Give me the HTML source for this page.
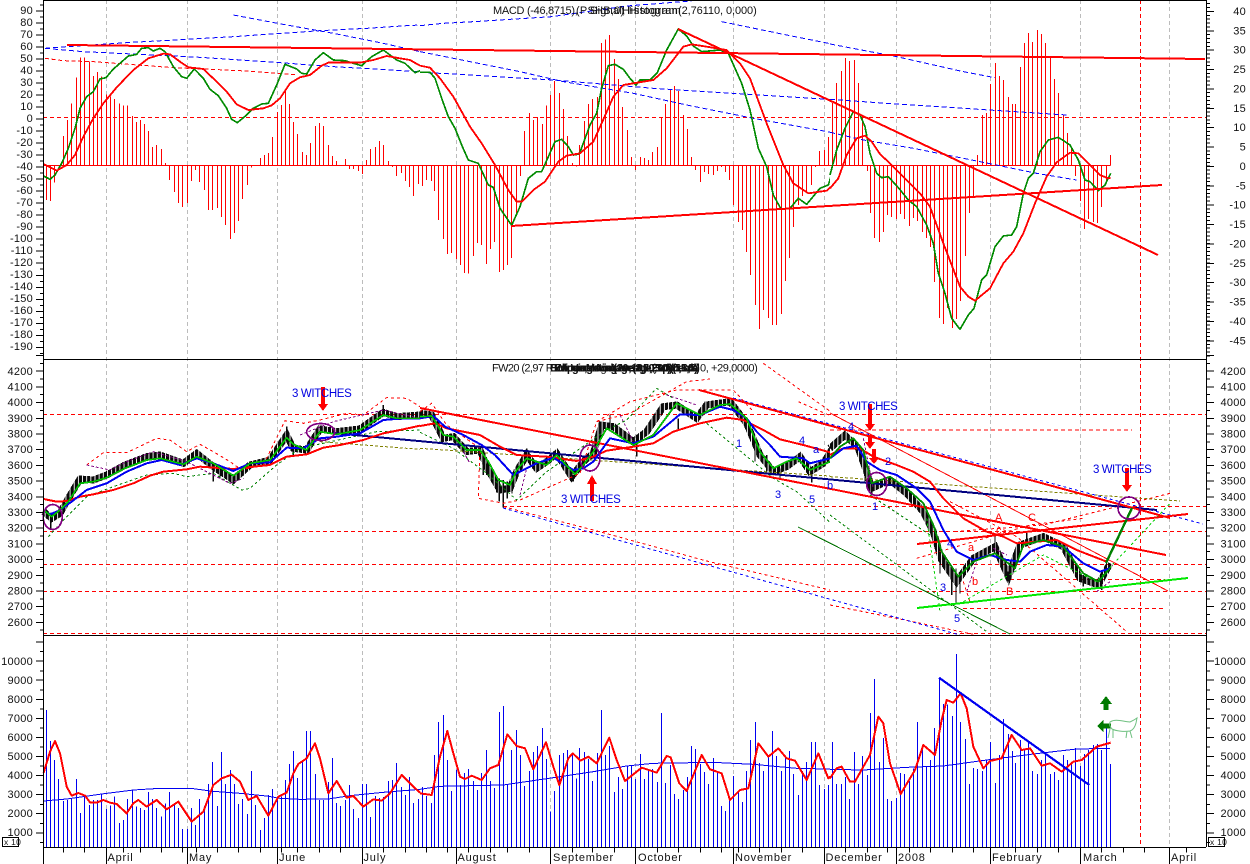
<!DOCTYPE html>
<html><head><meta charset="utf-8"><title>FW20 chart</title>
<style>
html,body{margin:0;padding:0;background:#fff;width:1250px;height:864px;overflow:hidden}
svg{display:block}
text{font-family:"Liberation Sans",sans-serif;font-size:11px;fill:#111;letter-spacing:.25px}
.w{fill:#0000e0;font-size:11.5px}
.b{fill:#0000e0;font-size:11px}
.r{fill:#f00;font-size:11px}
</style></head><body>
<svg width="1250" height="864" viewBox="0 0 1250 864" xmlns="http://www.w3.org/2000/svg" shape-rendering="crispEdges">
<defs><clipPath id="c2"><rect x="0" y="-100" width="1230" height="1400"/></clipPath>
<pattern id="cd" patternUnits="userSpaceOnUse" width="12.45" height="12"><rect x="0" y="0" width="9" height="12" fill="#0a0a0a"/></pattern></defs>
<rect width="1250" height="864" fill="#fff"/>

<!-- gridlines -->
<g stroke="#bcbcbc" stroke-width="1" stroke-dasharray="4 3" fill="none">
<path d="M106.5 0V847M187.5 0V847M277.5 0V847M362.5 0V847M456.5 0V847M550.5 0V847M635.5 0V847M733.5 0V847M824.5 0V847M896.5 0V847M990.5 0V847M1080.5 0V847M1169.5 0V847"/>
</g>
<path d="M1140.5 0V847" stroke="#f00" stroke-dasharray="4 3" fill="none"/>
<g stroke="#f00" stroke-dasharray="4 3" fill="none" stroke-width="1">
<path d="M43 117.5H1206M43 414.5H1206M503 506.5H1206M43 531.5H1206M43 564.5H1206M43 591.5H1206M43 633.5H1206M830 430H1132M1010 579.5H1165M963 608.5H1163"/>
</g>

<!-- MACD histogram -->
<g fill="none" stroke="#f00" stroke-width="3">
<path transform="scale(.33333)" d="M131 496H1260M139 496V600M151 496V603M163 496V548M190 496V408M202 496V360M214 496V310M229 496V232M241 496V172M253 496V172M268 496V185M281 496V228M293 496V216M305 496V229M319 496V283M331 496V290M343 496V297M358 496V310M370 496V316M382 496V316M397 496V348M409 496V366M421 496V360M433 496V372M445 496V393M457 496V441M469 496V435M484 496V447M496 496V489M508 496V540M523 496V576M535 496V609M547 496V621M562 496V609M574 496V543M586 496V510M598 496V546M613 496V570M625 496V630M637 496V630M652 496V624M664 496V651M676 496V675M691 496V717M703 496V699M715 496V663M727 496V597M742 496V555M754 496V503M781 496V474M793 496V465M805 496V459M817 496V411M832 496V336M844 496V315M856 496V270M868 496V312M880 496V366M892 496V402M907 496V456M919 496V465M931 496V429M946 496V378M958 496V369M970 496V378M985 496V435M997 496V468M1009 496V483M1036 496V477M1048 496V507M1060 496V507M1075 496V513M1087 496V522M1099 496V480M1111 496V447M1126 496V441M1138 496V423M1150 496V435M1165 496V483M1177 496V501M1189 496V528M1204 496V519M1216 496V543M1228 496V561M1240 496V588M1255 496V552"/>
<path transform="translate(420,0) scale(.33333)" clip-path="url(#c2)" d="M0 496H1230M7 496V558M19 496V540M34 496V543M44 496V573M55 496V660M70 496V717M82 496V762M94 496V759M109 496V777M121 496V795M133 496V819M145 496V821M160 496V768M172 496V729M184 496V735M199 496V792M211 496V747M223 496V726M238 496V816M250 496V810M262 496V795M274 496V774M289 496V645M301 496V528M313 496V393M328 496V339M340 496V360M352 496V351M367 496V372M379 496V316M391 496V285M403 496V243M418 496V279M430 496V327M442 496V408M457 496V489M469 496V500M478 496V435M493 496V363M505 496V312M517 496V297M532 496V291M544 496V129M556 496V118M568 496V105M583 496V177M595 496V237M607 496V321M622 496V390M634 496V471M646 496V510M661 496V471M673 496V474M685 496V480M697 496V456M712 496V441M724 496V351M736 496V312M751 496V267M763 496V258M775 496V273M790 496V345M802 496V387M814 496V471M826 496V510M841 496V546M853 496V516M865 496V522M880 496V525M892 496V513M904 496V501M916 496V516M928 496V540M940 496V615M955 496V666M967 496V690M979 496V756M991 496V825M1006 496V915M1018 496V987M1030 496V930M1045 496V954M1057 496V975M1069 496V975M1084 496V942M1096 496V843M1108 496V774M1120 496V681M1135 496V615M1147 496V588M1159 496V573M1174 496V555M1186 496V501M1198 496V453M1213 496V450M1225 496V411"/>
<path transform="translate(830,0) scale(.33333)" d="M0 496H842M7 496V309M19 496V249M34 496V213M46 496V174M58 496V183M73 496V180M85 496V249M97 496V354M112 496V513M121 496V639M133 496V714M148 496V726M160 496V696M172 496V645M184 496V651M199 496V657M211 496V642M223 496V657M238 496V678M250 496V654M262 496V663M277 496V696M289 496V714M301 496V741M313 496V846M328 496V954M340 496V972M352 496V924M367 496V984M379 496V957M391 496V903M406 496V768M418 496V639M430 496V591M442 496V465M457 496V345M469 496V339M481 496V252M496 496V189M508 496V228M520 496V240M535 496V291M547 496V312M556 496V312M571 496V201M583 496V129M595 496V99M607 496V126M622 496V90M634 496V102M646 496V129M661 496V171M673 496V237M685 496V279M700 496V345M712 496V399M724 496V440M737 496V528M751 496V603M763 496V687M775 496V657M790 496V666M802 496V669M814 496V621M829 496V543M841 496V465"/>
</g>

<!-- top dashed trend lines -->
<g fill="none" stroke="#00f" stroke-width="3" stroke-dasharray="15 9">
<path transform="scale(.33333)" d="M135 145L200 140L395 127L560 118L700 110L960 92L1100 85L1220 77L1260 75M135 145L250 155L420 163L600 172L800 185L1000 200L1260 215M700 45L860 75L1000 100L1150 130L1260 155"/>
<path transform="translate(420,0) scale(.33333)" clip-path="url(#c2)" d="M0 77L70 70L160 65L395 50L620 18L800 4L860 -3M0 217L100 222L400 240L700 265L1260 300M0 155L100 175L300 215L430 245L640 280L800 315L1000 355L1250 400M905 65L1100 105L1260 137"/>
<path transform="translate(830,0) scale(.33333)" d="M0 298L170 310L400 325L710 345M0 397L100 420L250 445L450 485L620 520L740 540M0 132L110 153L200 170L400 215L495 233"/>
</g>
<path transform="scale(.33333)" fill="none" stroke="#f00" stroke-width="3" stroke-dasharray="12 8" d="M135 175L190 182L280 185L520 203L720 212L890 224"/>

<!-- MACD lines -->
<g fill="none" stroke="#008a00" stroke-width="5" stroke-linejoin="round">
<path transform="scale(.33333)" d="M131 528L150 538L165 525L185 490L205 445L225 385L240 325L260 290L280 275L300 237L318 233L340 207L360 190L385 168L410 163L425 145L445 143L460 153L480 145L495 155L520 200L545 230L560 235L583 207L610 235L630 268L655 287L680 325L695 358L712 368L740 345L760 325L785 312L805 310L830 255L855 193L890 207L905 220L920 222L945 180L970 158L1000 180L1035 182L1060 190L1085 197L1115 170L1150 150L1190 180L1215 190L1245 218L1260 212"/>
<path transform="translate(420,0) scale(.33333)" clip-path="url(#c2)" d="M0 217L30 217L45 235L65 295L85 350L105 385L125 435L145 480L175 490L205 555L220 562L240 625L275 676L300 620L325 535L350 515L365 515L405 425L425 418L445 440L460 465L478 462L510 375L530 340L545 265L565 197L585 193L610 208L630 235L648 255L660 240L690 240L712 218L740 150L775 87L800 108L820 138L845 155L900 150L925 160L965 250L990 330L1015 445L1040 500L1060 585L1083 627L1110 625L1135 595L1160 613L1200 565L1225 555L1245 490L1260 430"/>
<path transform="translate(830,0) scale(.33333)" d="M0 525L20 450L45 385L70 335L90 345L105 380L120 460L140 520L155 533L175 530L205 563L235 600L260 620L290 675L310 730L325 820L345 880L365 955L390 988L415 945L432 925L455 840L470 825L495 740L520 708L545 705L560 680L580 580L595 535L610 520L630 455L655 420L685 412L720 435L745 480L765 540L780 545L805 572L825 555L842 520"/>
</g>
<g fill="none" stroke="#f00" stroke-width="5.5" stroke-linejoin="round">
<path transform="scale(.33333)" d="M131 492L170 512L200 495L225 465L250 410L280 355L310 310L350 262L400 210L445 175L490 161L510 163L540 185L565 202L610 207L650 245L680 275L710 313L745 330L790 325L815 316L840 295L870 250L900 232L930 225L965 197L985 188L1080 188L1120 180L1160 168L1200 175L1230 180L1260 197"/>
<path transform="translate(420,0) scale(.33333)" clip-path="url(#c2)" d="M0 197L30 203L60 235L100 290L150 380L185 430L225 495L265 570L290 605L305 605L340 570L375 545L415 485L440 467L480 460L520 425L545 370L580 290L610 255L640 250L700 240L740 205L790 140L815 133L860 140L920 150L960 190L990 235L1040 370L1090 495L1120 550L1165 580L1220 572L1245 550L1260 535"/>
<path transform="translate(830,0) scale(.33333)" d="M0 565L25 535L50 465L80 415L105 407L125 425L150 462L190 500L240 550L270 580L300 620L340 730L390 860L415 890L435 902L480 865L520 790L550 755L580 700L615 610L650 530L680 487L720 458L745 460L780 495L810 525L835 535L842 533"/>
</g>
<g fill="none" stroke="#f00" stroke-width="2">
<path d="M67 45L1205 59M678 29L1158 255M511 226L1162 185"/>
</g>

<!-- candles -->
<g fill="none" stroke="url(#cd)">
<g stroke-width="21">
<path transform="translate(0,355) scale(.33333)" d="M131 470L155 490L180 475L205 430L240 372L280 375L320 360L375 330L440 305L480 300L550 325L590 295L640 335L700 375L750 330L810 315L860 240L880 280L920 285L960 222L1010 230L1080 222L1150 172L1190 185L1260 180"/>
<path transform="translate(420,355) scale(.33333)" clip-path="url(#c2)" d="M0 175L35 180L70 250L100 245L140 290L180 285L205 345L240 405L270 400L290 350L320 300L350 340L380 320L410 295L455 365L490 320L520 295L545 210L580 215L640 260L680 230L730 155L770 150L830 190L860 150L930 140L980 205L1020 300L1060 350L1100 335L1140 305L1170 350L1210 325L1250 260"/>
<path transform="translate(830,355) scale(.33333)" d="M0 280L45 240L85 280L110 350L125 400L180 375L230 415L280 470L310 530L335 615L380 680L430 610L495 575L535 665L570 570L640 545L700 575L750 670L805 690L840 625"/>
</g>
</g>
<g fill="none" stroke="#0a0a0a" stroke-width="4">
<path transform="translate(0,355) scale(.33333)" d="M130 470V495M152 490V522M640 330V380M860 215V260M1150 150V185M880 260V300M660 340V370"/>
<path transform="translate(420,355) scale(.33333)" d="M230 370V412M238 370V440M250 375V458M262 380V430M276 385V415M190 320V360M200 325V360M570 180V220M650 255V305M775 190V225M1005 250V320M1175 340V382M1040 300V350M320 280V320M460 360V380M1080 340V372"/>
<path transform="translate(830,355) scale(.33333)" d="M378 640V745M365 660V720M390 650V715M330 590V655M345 600V640M105 290V380M125 380V420M495 535V590M535 650V680M760 660V695M815 670V705M590 530V560M240 410V440"/>
</g>

<!-- middle thin dashed channels -->
<g fill="none" stroke-width="3">
<g stroke="#f00" stroke-dasharray="9 9">
<path transform="translate(0,355) scale(.33333)" d="M260 330L310 293L380 293L470 250L510 255L560 290L600 268L640 290L690 320L725 345L790 330L855 197L910 205L960 195L1040 175L1090 180L1160 128L1220 130L1260 155"/>
<path transform="translate(420,355) scale(.33333)" clip-path="url(#c2)" d="M0 170L35 145L80 210L180 280L175 430L250 445L300 435L480 355L530 200L630 175L800 80L870 72M530 200L630 140L770 105L940 105L1000 170M250 455L520 525L860 618L1260 712M1030 25L1260 190M1135 140L1260 195"/>
<path transform="translate(830,355) scale(.33333)" d="M360 440L560 545L890 830M0 750L200 790L430 838M1020 415L840 460L640 510L370 530M260 610L430 560L600 510L760 490M400 680L420 740"/>
</g>
<g stroke="#008000" stroke-dasharray="8 8">
<path transform="translate(0,355) scale(.33333)" d="M145 545L200 485L260 425L340 395L440 360L520 355L560 365L640 355L725 405L750 400L830 330L900 280L1130 230L1260 225"/>
<path transform="translate(420,355) scale(.33333)" clip-path="url(#c2)" d="M0 232L100 280L200 355L290 435L380 350L560 225L620 195L710 100L760 130M860 205L1060 370L1130 410L1260 530"/>
<path transform="translate(830,355) scale(.33333)" d="M0 480L470 830M120 420L300 540"/>
</g>
<g stroke="#00d000" stroke-dasharray="8 8">
<path transform="translate(830,355) scale(.33333)" d="M400 740L640 600L800 680L1020 445M290 490L330 770"/>
</g>
<g stroke="#800080" stroke-dasharray="8 6">
<path transform="translate(0,355) scale(.33333)" d="M260 330L330 345L380 320L460 290L560 320L690 385L730 370M900 240L1000 200L1150 165L1260 190"/>
<path transform="translate(420,355) scale(.33333)" clip-path="url(#c2)" d="M300 420L320 340M600 180L640 260M740 120L830 150M130 290L150 325"/>
<path transform="translate(830,355) scale(.33333)" d="M100 250L130 400M410 710L440 620M490 580L530 600M800 710L840 680"/>
</g>
<path transform="translate(0,355) scale(.33333)" stroke="#808000" stroke-dasharray="9 6" d="M960 260L1260 283"/>
<path transform="translate(420,355) scale(.33333)" clip-path="url(#c2)" stroke="#808000" stroke-dasharray="9 6" d="M0 280L800 335L1260 365"/>
<path transform="translate(830,355) scale(.33333)" stroke="#808000" stroke-dasharray="9 6" d="M0 365L1050 438"/>
<path stroke="#00f" stroke-width="1" stroke-dasharray="3 3" d="M503 507L840 601L960 634M733 397L1203 523" transform="translate(0,1)"/>
</g>
<g fill="none">
<path d="M798 527L1010 634" stroke="#007000" stroke-width="1"/>
<path d="M830 413L1168 591" stroke="#f00" stroke-width="1"/>
</g>

<!-- navy + red trend lines -->
<path d="M333 433L1157 510" stroke="#000080" stroke-width="2" fill="none"/>
<g fill="none" stroke="#f00" stroke-width="2">
<path d="M420 408L1166 555M699 390L1170 518M917 544L1188 514"/>
</g>
<path d="M917 608L1188 578" stroke="#00e800" stroke-width="2" fill="none"/>

<!-- middle MAs -->
<g fill="none" stroke="#f00" stroke-width="6" stroke-linejoin="round">
<path transform="translate(0,355) scale(.33333)" d="M131 432L170 440L200 438L240 425L280 418L340 405L400 385L450 362L490 350L560 343L600 335L700 342L760 335L810 330L860 305L920 298L970 278L1020 270L1090 255L1150 235L1200 225L1260 212"/>
<path transform="translate(420,355) scale(.33333)" clip-path="url(#c2)" d="M0 213L45 205L80 220L180 240L240 275L290 300L380 305L470 318L520 305L560 287L640 275L700 265L760 230L840 205L920 188L970 195L1030 225L1080 253L1150 270L1230 292L1260 285"/>
<path transform="translate(830,355) scale(.33333)" d="M0 300L40 280L90 280L130 305L200 330L250 350L300 380L340 430L400 490L470 530L520 545L560 565L620 560L680 555L740 585L830 620"/>
</g>
<g fill="none" stroke="#0000f0" stroke-width="6" stroke-linejoin="round">
<path transform="translate(0,355) scale(.33333)" d="M131 468L150 478L175 468L215 440L260 405L320 385L380 350L440 325L485 315L540 330L590 310L640 325L700 348L750 325L810 322L860 278L910 280L960 250L1010 245L1080 235L1150 195L1210 190L1260 190"/>
<path transform="translate(420,355) scale(.33333)" clip-path="url(#c2)" d="M0 190L40 183L75 215L130 240L185 270L225 300L280 360L350 325L400 308L460 345L490 340L520 320L570 250L640 265L700 245L780 178L840 180L900 155L940 165L980 190L1010 230L1050 270L1080 305L1150 310L1170 325L1230 310L1260 290"/>
<path transform="translate(830,355) scale(.33333)" d="M0 310L40 280L80 272L110 320L150 345L200 360L260 400L300 440L340 525L380 590L430 615L480 600L530 615L570 620L600 590L650 570L700 575L760 625L810 650L840 640"/>
</g>
<g fill="none" stroke="#009000" stroke-width="5.5" stroke-linejoin="round">
<path transform="translate(0,355) scale(.33333)" d="M131 465L155 485L180 465L205 440L240 385L280 380L320 368L375 340L440 315L480 310L550 328L590 305L640 325L700 362L750 325L810 315L860 248L880 268L920 285L960 230L1010 238L1080 225L1150 180L1190 190L1260 190"/>
<path transform="translate(420,355) scale(.33333)" clip-path="url(#c2)" d="M0 185L35 183L70 240L100 245L140 285L180 285L205 320L235 375L270 390L290 345L320 310L380 330L410 300L465 358L490 330L520 290L560 220L640 270L700 240L770 145L840 180L900 150L930 147L980 190L1020 290L1060 340L1100 320L1130 310L1170 345L1230 320L1260 275"/>
<path transform="translate(830,355) scale(.33333)" d="M0 310L30 275L70 250L100 285L125 385L180 365L230 400L280 445L310 510L335 590L385 665L430 620L495 595L555 640L580 570L640 555L700 575L760 655L805 680L840 640"/>
</g>
<g fill="none" stroke="#00e000" stroke-width="2.4" stroke-linejoin="round">
<path transform="translate(0,355) scale(.33333)" d="M131 465L155 485L180 465L205 440L240 385L280 380L320 368L375 340L440 315L480 310L550 328L590 305L640 325L700 362L750 325L810 315L860 248L880 268L920 285L960 230L1010 238L1080 225L1150 180L1190 190L1260 190"/>
<path transform="translate(420,355) scale(.33333)" clip-path="url(#c2)" d="M0 185L35 183L70 240L100 245L140 285L180 285L205 320L235 375L270 390L290 345L320 310L380 330L410 300L465 358L490 330L520 290L560 220L640 270L700 240L770 145L840 180L900 150L930 147L980 190L1020 290L1060 340L1100 320L1130 310L1170 345L1230 320L1260 275"/>
</g>
<path d="M1106 563L1132 508" stroke="#008000" stroke-width="2.4" fill="none"/>

<!-- circles -->
<g fill="none" stroke="#800080" stroke-width="1.7">
<ellipse cx="52.7" cy="517" rx="9.5" ry="12.5"/>
<ellipse cx="320.7" cy="432" rx="14" ry="8.5"/>
<ellipse cx="590" cy="458" rx="10" ry="13"/>
<ellipse cx="876.7" cy="484" rx="10" ry="11.5"/>
<ellipse cx="1129" cy="508" rx="11" ry="11"/>
</g>

<!-- red arrows -->
<g fill="#f00">
<path d="M321 387H325V404H328L323 411L318 404H321Z"/>
<path d="M590 501H594V484H597L592 475L587 484H590Z"/>
<path d="M868 404H872V424H875L870 431L865 424H868Z"/>
<path d="M868 435H872V442H875L870 449L865 442H868Z"/>
<path d="M872 449H876V458H879L874 464L869 458H872Z"/>
<path d="M1125 468H1129V485H1132L1127 492L1122 485H1125Z"/>
</g>

<!-- text annotations -->
<g>
<text class="w" x="292" y="397" textLength="60">3 WITCHES</text>
<text class="w" x="561" y="503" textLength="60">3 WITCHES</text>
<text class="w" x="839" y="410" textLength="59">3 WITCHES</text>
<text class="w" x="1093" y="473" textLength="59">3 WITCHES</text>
<text class="b" x="736" y="447">1</text><text class="b" x="799" y="444">4</text><text class="b" x="813" y="453">a</text><text class="b" x="827" y="489">b</text><text class="b" x="775" y="498">3</text><text class="b" x="809" y="503">5</text>
<text class="b" x="872" y="510">1</text><text class="b" x="885" y="465">2</text><text class="b" x="940" y="591">3</text><text class="b" x="947" y="547">4</text><text class="b" x="954" y="622">5</text><text class="b" x="848" y="430">4</text>
<text class="r" x="995" y="521">A</text><text class="r" x="1028" y="521">C</text><text class="r" x="968" y="551">a</text><text class="r" x="972" y="585">b</text><text class="r" x="1006" y="595">B</text><text class="r" x="996" y="534">c</text>
</g>

<!-- volume -->
<g fill="none" stroke="#0000f0" stroke-width="3">
<path transform="translate(0,630) scale(.33333)" d="M139 652V240M151 652V333M163 652V390M175 652V447M190 652V513M202 652V510M214 652V505M229 652V447M241 652V549M253 652V495M268 652V525M281 652V510M293 652V510M305 652V492M319 652V537M331 652V527M343 652V500M358 652V579M370 652V570M382 652V507M397 652V480M409 652V530M421 652V534M433 652V540M445 652V486M457 652V507M469 652V534M484 652V560M496 652V520M508 652V486M523 652V520M535 652V534M547 652V597M562 652V597M574 652V534M586 652V585M598 652V507M613 652V528M625 652V462M637 652V396M652 652V528M664 652V366M676 652V462M691 652V420M703 652V462M715 652V522M727 652V507M742 652V552M754 652V423M766 652V525M781 652V600M793 652V564M805 652V495M817 652V477M832 652V510M844 652V500M856 652V450M868 652V402M880 652V363M892 652V444M907 652V393M919 652V303M931 652V303M946 652V432M958 652V510M970 652V510M985 652V456M997 652V384M1009 652V519M1021 652V528M1036 652V510M1048 652V465M1060 652V537M1075 652V564M1087 652V462M1099 652V462M1111 652V561M1126 652V498M1138 652V504M1150 652V501M1165 652V453M1177 652V450M1189 652V399M1204 652V471M1216 652V495M1228 652V441M1240 652V519M1255 652V507"/>
<path transform="translate(420,630) scale(.33333)" clip-path="url(#c2)" d="M7 652V471M19 652V498M34 652V519M43 652V375M55 652V276M70 652V255M82 652V390M94 652V483M109 652V418M121 652V465M133 652V429M145 652V417M160 652V453M172 652V480M184 652V429M199 652V360M211 652V453M223 652V474M238 652V246M250 652V228M262 652V465M274 652V360M289 652V300M301 652V375M313 652V468M328 652V423M340 652V366M352 652V348M367 652V294M379 652V387M391 652V545M403 652V483M418 652V375M430 652V369M442 652V360M457 652V375M469 652V445M478 652V354M493 652V366M505 652V387M517 652V453M532 652V369M544 652V240M556 652V375M568 652V348M583 652V486M595 652V441M607 652V477M622 652V410M634 652V408M646 652V447M661 652V372M673 652V447M685 652V417M697 652V417M712 652V456M724 652V249M736 652V459M751 652V405M763 652V492M775 652V507M790 652V480M802 652V441M814 652V348M826 652V357M841 652V402M853 652V426M865 652V462M880 652V384M892 652V426M904 652V528M916 652V543M928 652V510M940 652V438M955 652V486M967 652V516M979 652V423M991 652V330M1006 652V276M1018 652V399M1030 652V423M1045 652V380M1057 652V303M1069 652V378M1084 652V423M1096 652V384M1108 652V363M1120 652V432M1135 652V495M1147 652V423M1159 652V396M1174 652V336M1186 652V336M1198 652V465M1213 652V477M1225 652V465"/>
<path transform="translate(830,630) scale(.33333)" d="M7 652V336M19 652V462M34 652V462M46 652V441M58 652V507M73 652V366M85 652V462M97 652V378M112 652V435M121 652V249M133 652V147M148 652V396M160 652V324M172 652V507M184 652V513M199 652V504M211 652V429M223 652V432M238 652V453M250 652V415M262 652V276M277 652V355M289 652V411M301 652V390M313 652V294M328 652V143M340 652V222M352 652V223M367 652V258M379 652V72M391 652V276M406 652V327M418 652V462M430 652V414M442 652V417M457 652V423M469 652V390M481 652V336M496 652V459M508 652V375M520 652V267M535 652V312M547 652V363M556 652V399M571 652V330M583 652V357M595 652V333M607 652V423M622 652V432M634 652V390M646 652V375M661 652V432M673 652V426M685 652V450M700 652V375M712 652V390M724 652V400M737 652V354M751 652V408M763 652V372M775 652V360M790 652V345M802 652V342M814 652V360M829 652V285M841 652V402"/>
</g>
<g fill="none" stroke="#0000f0" stroke-width="3">
<path transform="translate(0,630) scale(.33333)" d="M131 513L200 507L270 497L320 490L400 480L480 475L580 476L640 484L720 490L800 498L840 505L900 508L985 507L1050 497L1150 487L1260 478"/>
<path transform="translate(420,630) scale(.33333)" clip-path="url(#c2)" d="M0 478L60 469L250 465L400 443L520 425L620 408L700 400L880 397L1000 403L1130 415L1260 418"/>
<path transform="translate(830,630) scale(.33333)" d="M0 418L100 420L230 412L340 408L470 390L610 372L740 357L840 355"/>
</g>
<g fill="none" stroke="#f00" stroke-width="6" stroke-linejoin="round">
<path transform="translate(0,630) scale(.33333)" d="M131 428L150 365L165 333L180 370L200 470L215 497L235 489L255 497L270 517L290 518L310 510L330 518L350 522L380 550L400 520L415 510L440 530L470 510L500 538L535 515L575 575L610 545L640 465L665 445L695 434L720 455L745 510L770 498L805 557L835 500L860 488L880 430L895 402L920 385L945 340L960 385L985 490L1010 453L1040 503L1060 498L1090 530L1120 508L1145 512L1170 490L1205 435L1240 470L1260 488"/>
<path transform="translate(420,630) scale(.33333)" clip-path="url(#c2)" d="M0 490L35 495L60 380L82 303L100 370L120 440L135 447L155 437L185 450L210 415L235 405L262 313L290 348L315 355L340 418L378 337L400 410L418 465L445 385L458 370L482 392L505 380L530 400L568 323L590 390L615 453L665 413L710 428L740 378L752 382L778 460L800 483L845 375L870 418L905 430L930 510L960 480L985 475L1015 340L1045 380L1075 355L1100 385L1125 392L1160 450L1195 370L1225 445L1260 415"/>
<path transform="translate(830,630) scale(.33333)" d="M0 445L20 415L35 410L60 455L75 455L100 410L120 375L145 260L160 280L180 400L212 492L240 445L255 420L280 345L315 375L335 270L350 210L370 218L392 190L410 235L430 350L460 415L480 393L515 385L545 315L575 360L600 355L635 407L660 400L695 425L730 395L755 390L800 350L842 338"/>
</g>
<path d="M939 677.7L1089.3 785" stroke="#0000f0" stroke-width="2.2" fill="none"/>

<!-- green arrows and cow -->
<g fill="#007a00">
<path d="M1106 696L1112 704H1108.5V710H1103.5V704H1100Z"/>
<path d="M1097 726L1103.5 720V723.5H1111V728.5H1103.5V732Z"/>
</g>
<g fill="none" stroke="#6fc080" stroke-width="1" shape-rendering="auto">
<path d="M1110 722C1116 718 1124 722 1130 722L1134 720L1137 718L1136 723C1135 727 1133 730 1130 731C1124 732 1116 731 1112 729C1110 727 1109 725 1110 722ZM1110 729L1108 738M1113 730L1113 738M1127 731L1126 738M1130 731L1132 738"/>
</g>

<!-- frame -->
<g stroke="#000" stroke-width="1" fill="none">
<path d="M43.5 0V864M1206.5 0V847M43 .5H1206M43 359.5H1206M43 635.5H1206M43 847.5H1206"/>
<rect x="2.5" y="837.5" width="16" height="9"/>
<rect x="1208.5" y="837.5" width="16" height="9"/>
</g>
<!-- axis ticks -->
<g fill="none" stroke="#000">
<path stroke-width="7" stroke-dasharray="1 11.02" d="M39.5 -1.7V359"/>
<path stroke-width="3" stroke-dasharray="1 11.02" d="M41.5 4.3V359"/>
<path stroke-width="7" stroke-dasharray="1 14.7" d="M39.5 355V635"/>
<path stroke-width="3" stroke-dasharray="1 14.7" d="M41.5 362.8V635"/>
<path stroke-width="7" stroke-dasharray="1 18.07" d="M39.5 641.6V847"/>
<path stroke-width="3" stroke-dasharray="1 18.07" d="M41.5 651.2V847"/>
<path stroke-width="7" stroke-dasharray="1 18.37" d="M1210.5 11V359"/>
<path stroke-width="3" stroke-dasharray="1 2.87" d="M1208.5 3.2V359"/>
<path stroke-width="7" stroke-dasharray="1 14.7" d="M1210.5 355V635"/>
<path stroke-width="3" stroke-dasharray="1 14.7" d="M1208.5 362.8V635"/>
<path stroke-width="7" stroke-dasharray="1 18.07" d="M1210.5 641.6V847"/>
<path stroke-width="3" stroke-dasharray="1 18.07" d="M1208.5 651.2V847"/>
<path stroke-width="1" d="M106.5 847V864M187.5 847V864M277.5 847V864M362.5 847V864M456.5 847V864M550.5 847V864M635.5 847V864M733.5 847V864M824.5 847V864M896.5 847V864M990.5 847V864M1080.5 847V864M1169.5 847V864"/>
<path stroke-width="3" transform="translate(0,630) scale(.33333)" d="M190 652V667M253 652V667M370 652V667M421 652V667M484 652V667M547 652V667M590 652V667M652 652V667M715 652V667M781 652V667M844 652V667M892 652V667M958 652V667M1021 652V667M1150 652V667M1216 652V667"/>
<path stroke-width="3" transform="translate(420,630) scale(.33333)" d="M19 652V667M82 652V667M145 652V667M211 652V667M262 652V667M328 652V667M457 652V667M517 652V667M583 652V667M712 652V667M775 652V667M841 652V667M904 652V667M955 652V667M1018 652V667M1084 652V667M1147 652V667"/>
<path stroke-width="3" transform="translate(830,630) scale(.33333)" d="M46 652V667M112 652V667M172 652V667M238 652V667M301 652V667M367 652V667M430 652V667M556 652V667M622 652V667M685 652V667M814 652V667M880 652V667M943 652V667M1069 652V667"/>
</g>

<!-- titles -->
<text x="493" y="14" textLength="85">MACD (-46,8715),</text>
<text x="576" y="14">(PSHB,0)</text>
<text x="590" y="14">Signal, Histogram</text>
<text x="622" y="14" textLength="56">Histogram</text>
<text x="678" y="14" textLength="79">(2,76110, 0,000)</text>
<text x="492" y="371.5" textLength="62">FW20 (2,97 R</text>
<text x="550" y="371.5" textLength="150" font-weight="bold">Bollinger,Moving Average,Exponential</text>
<text x="554" y="371.5" textLength="146" font-weight="bold">Exponential(20,100,200)(13,3)</text>
<text x="558" y="371.5" textLength="140" font-weight="bold">Moving Average(3,50,10)(5,5,5)</text>
<text x="570" y="371.5" textLength="128">Moving Average(3,50,10)</text>
<text x="700" y="371.5" textLength="58">0, +29,0000)</text>

<!-- left labels top -->
<g text-anchor="end">
<text x="33" y="14">90</text><text x="33" y="26">80</text><text x="33" y="38">70</text><text x="33" y="50">60</text><text x="33" y="62">50</text><text x="33" y="74">40</text><text x="33" y="86">30</text><text x="33" y="98">20</text><text x="33" y="110">10</text><text x="33" y="122">0</text><text x="33" y="134">-10</text><text x="33" y="146">-20</text><text x="33" y="158">-30</text><text x="33" y="170">-40</text><text x="33" y="182">-50</text><text x="33" y="194">-60</text><text x="33" y="206">-70</text><text x="33" y="218">-80</text><text x="33" y="230">-90</text><text x="33" y="242">-100</text><text x="33" y="254">-110</text><text x="33" y="266">-120</text><text x="33" y="278">-130</text><text x="33" y="290">-140</text><text x="33" y="302">-150</text><text x="33" y="314">-160</text><text x="33" y="326">-170</text><text x="33" y="338">-180</text><text x="33" y="350">-190</text>
<text x="33" y="375">4200</text><text x="33" y="390.4">4100</text><text x="33" y="406">4000</text><text x="33" y="421.8">3900</text><text x="33" y="437.5">3800</text><text x="33" y="453.2">3700</text><text x="33" y="469">3600</text><text x="33" y="484.6">3500</text><text x="33" y="500.3">3400</text><text x="33" y="516">3300</text><text x="33" y="531.7">3200</text><text x="33" y="547.4">3100</text><text x="33" y="563">3000</text><text x="33" y="578.8">2900</text><text x="33" y="594.5">2800</text><text x="33" y="610.2">2700</text><text x="33" y="626">2600</text>
<text x="33" y="665">10000</text><text x="33" y="684">9000</text><text x="33" y="703">8000</text><text x="33" y="722">7000</text><text x="33" y="741">6000</text><text x="33" y="760">5000</text><text x="33" y="779">4000</text><text x="33" y="798">3000</text><text x="33" y="817">2000</text><text x="33" y="836">1000</text>
<text x="1246" y="15">40</text><text x="1246" y="34.4">35</text><text x="1246" y="53.7">30</text><text x="1246" y="73">25</text><text x="1246" y="92.5">20</text><text x="1246" y="112">15</text><text x="1246" y="131">10</text><text x="1246" y="150.6">5</text><text x="1246" y="170">0</text><text x="1246" y="189.3">-5</text><text x="1246" y="208.7">-10</text><text x="1246" y="228">-15</text><text x="1246" y="247.4">-20</text><text x="1246" y="266.8">-25</text><text x="1246" y="286.2">-30</text><text x="1246" y="305.6">-35</text><text x="1246" y="325">-40</text><text x="1246" y="344.3">-45</text>
<text x="1246" y="375">4200</text><text x="1246" y="390.4">4100</text><text x="1246" y="406">4000</text><text x="1246" y="421.8">3900</text><text x="1246" y="437.5">3800</text><text x="1246" y="453.2">3700</text><text x="1246" y="469">3600</text><text x="1246" y="484.6">3500</text><text x="1246" y="500.3">3400</text><text x="1246" y="516">3300</text><text x="1246" y="531.7">3200</text><text x="1246" y="547.4">3100</text><text x="1246" y="563">3000</text><text x="1246" y="578.8">2900</text><text x="1246" y="594.5">2800</text><text x="1246" y="610.2">2700</text><text x="1246" y="626">2600</text>
<text x="1246" y="665">10000</text><text x="1246" y="684">9000</text><text x="1246" y="703">8000</text><text x="1246" y="722">7000</text><text x="1246" y="741">6000</text><text x="1246" y="760">5000</text><text x="1246" y="779">4000</text><text x="1246" y="798">3000</text><text x="1246" y="817">2000</text><text x="1246" y="836">1000</text>
</g>
<text x="4" y="845" style="font-size:8.5px">x 10</text>
<text x="1210" y="845" style="font-size:8.5px">x 10</text>

<!-- months -->
<g>
<text x="107.5" y="861" style="letter-spacing:.8px">April</text>
<text x="189" y="861" style="letter-spacing:.8px">May</text>
<text x="279" y="861" style="letter-spacing:.8px">June</text>
<text x="363.5" y="861" style="letter-spacing:.8px">July</text>
<text x="457.5" y="861" style="letter-spacing:.8px">August</text>
<text x="553" y="861" style="letter-spacing:.8px">September</text>
<text x="638" y="861" style="letter-spacing:.8px">October</text>
<text x="735" y="861" style="letter-spacing:.8px">November</text>
<text x="825.5" y="861" style="letter-spacing:.8px">December</text>
<text x="898" y="861" style="letter-spacing:.8px">2008</text>
<text x="992" y="861" style="letter-spacing:.8px">February</text>
<text x="1083" y="861" style="letter-spacing:.8px">March</text>
<text x="1171" y="861" style="letter-spacing:.8px">April</text>
</g>
</svg>
</body></html>
